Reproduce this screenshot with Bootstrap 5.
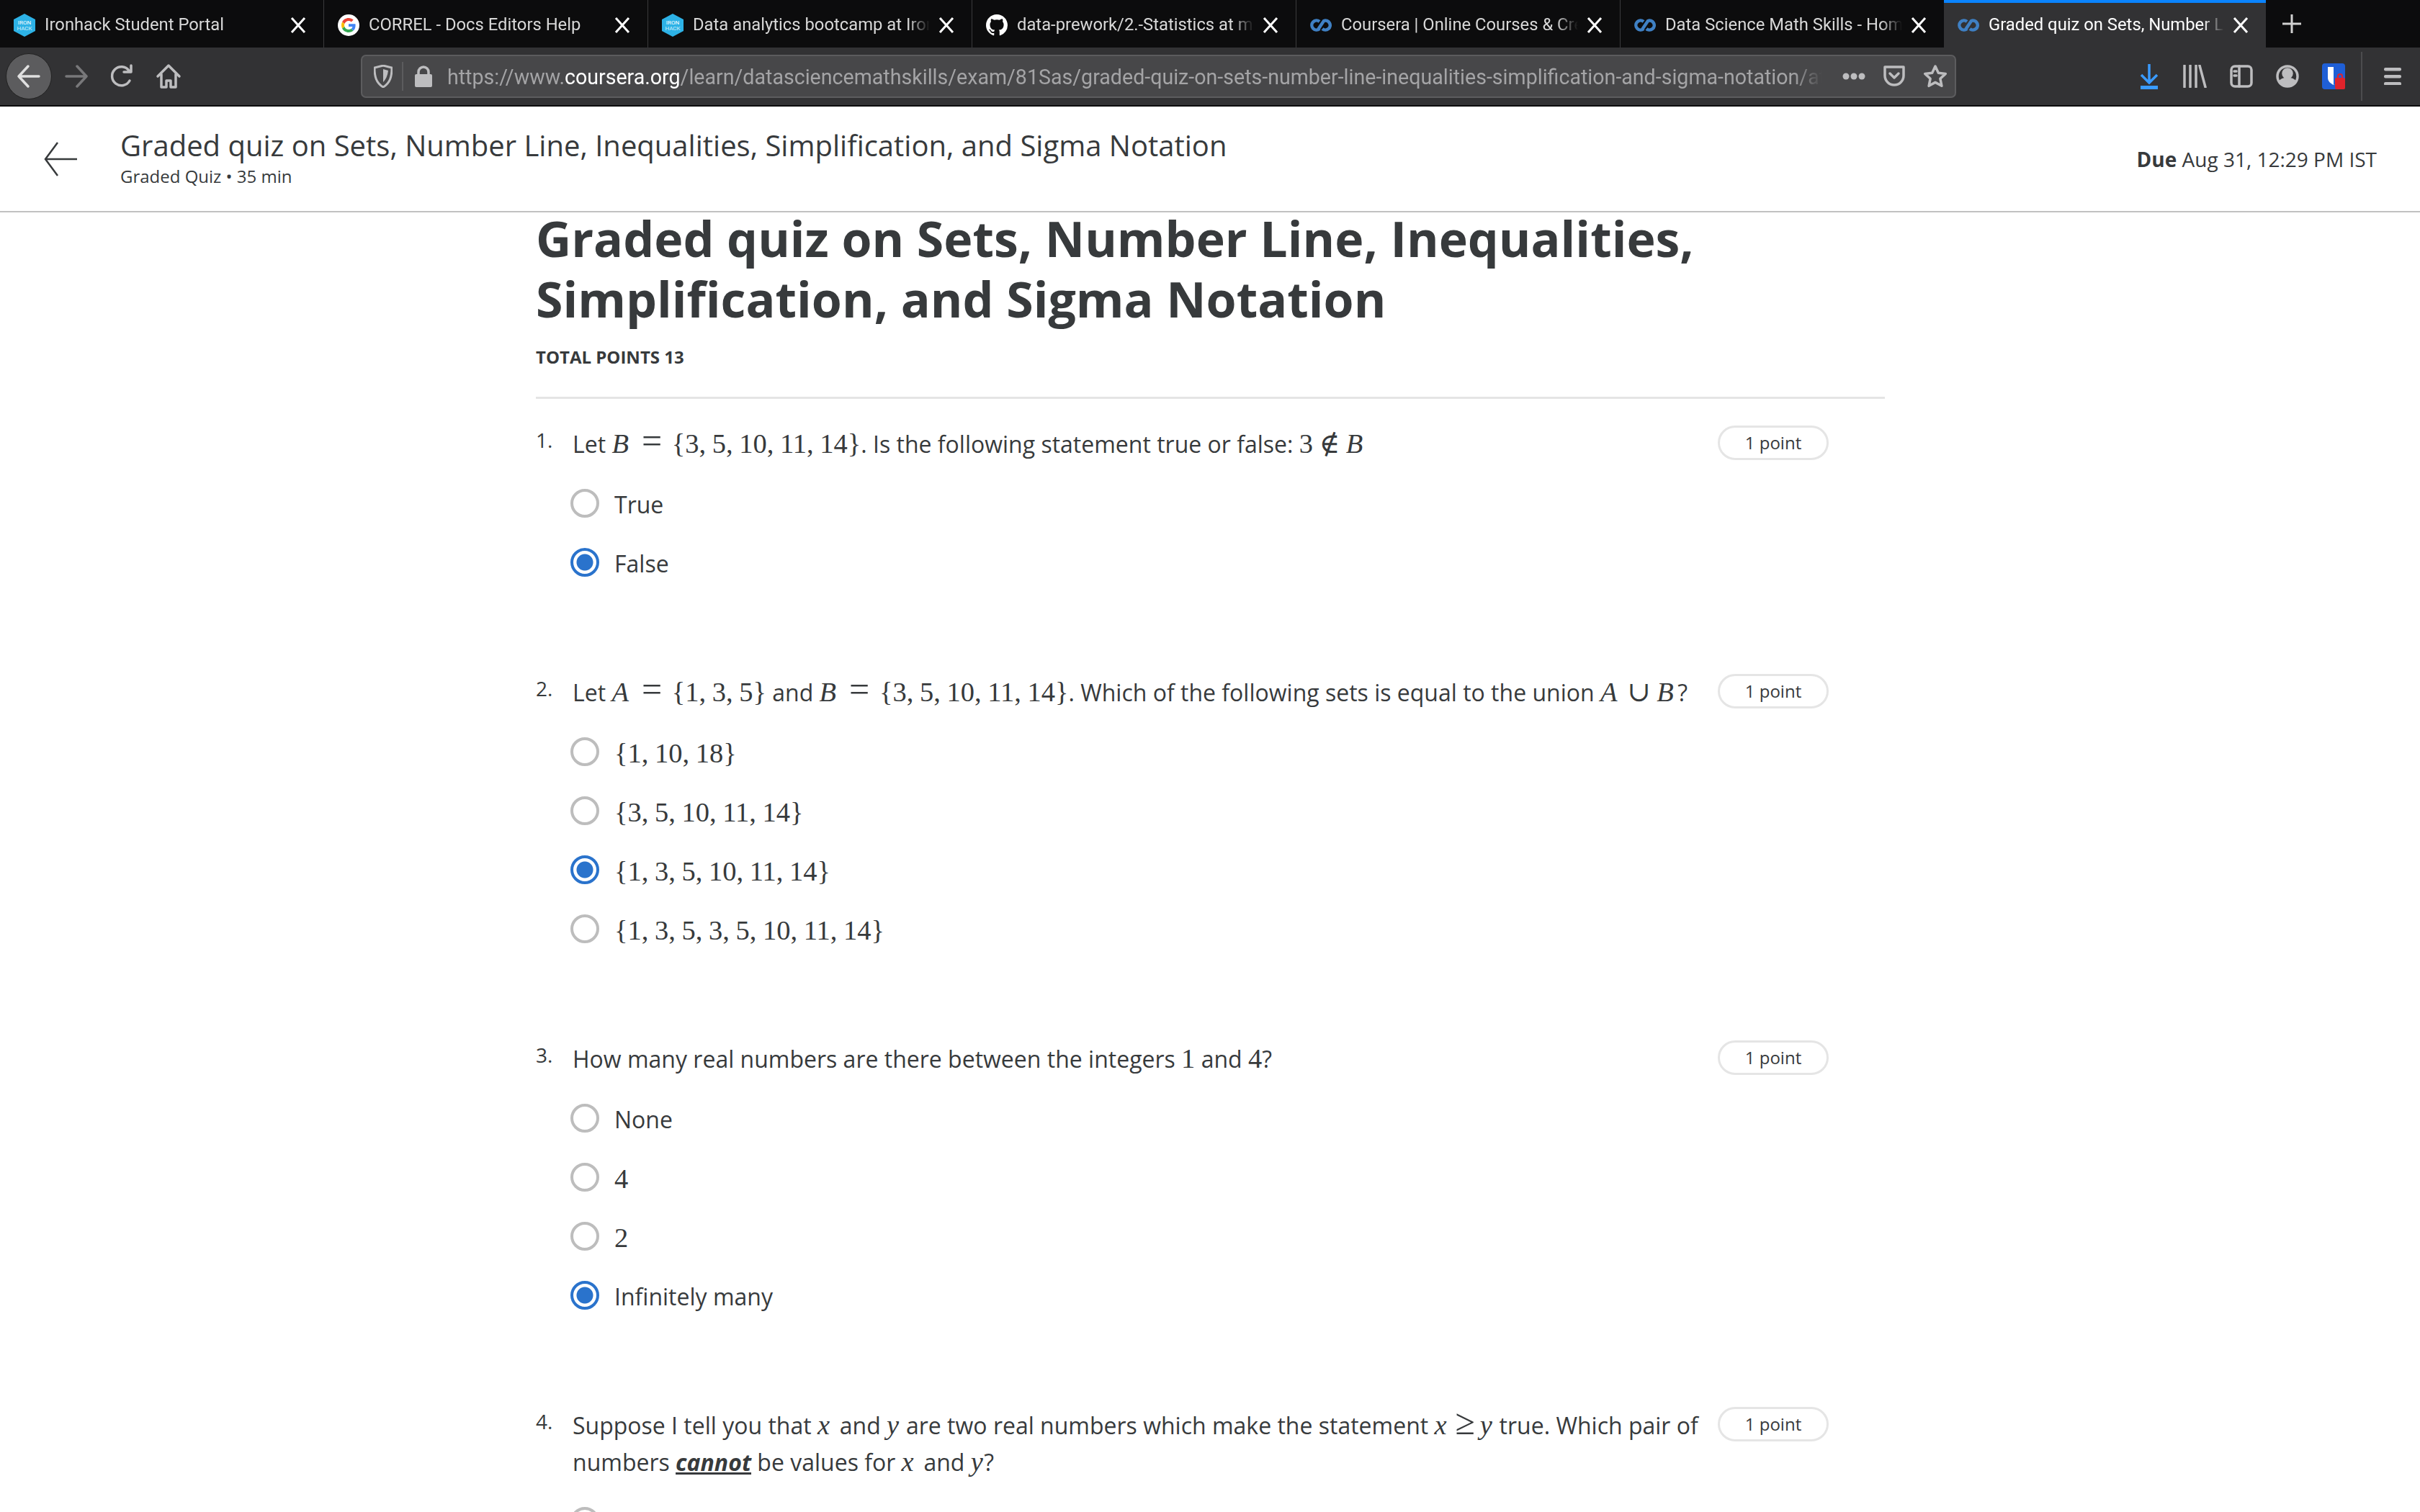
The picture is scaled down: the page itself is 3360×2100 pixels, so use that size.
<!DOCTYPE html>
<html lang="en">
<head>
<meta charset="UTF-8" />
<meta name="viewport" content="width=device-width, initial-scale=1.0" />
<title>Graded quiz on Sets, Number Line, Inequalities, Simplification, and Sigma Notation</title>
<link href="https://cdn.jsdelivr.net/npm/bootstrap@5.3.0/dist/css/bootstrap.min.css" rel="stylesheet" />
<style>
  html, body { height: 2100px; overflow: hidden; background: #fff; }
  body { font-family: "Open Sans", sans-serif; color: #373a3c; }

  /* browser chrome */
  .tabstrip { height: 66px; background: #0c0c0d; font-family: Roboto, sans-serif; }
  .tabitem { width: 450px; height: 66px; padding: 3px 24px 0 19px; border-right: 1.5px solid #3a3a3c; color: #d8d8d8; font-size: 23.8px; }
  .tabitem.noline { border-right-color: transparent; }
  .tabitem.current { width: 447px; margin-left: -1px; background: #323234; border-top: 4px solid #0a84ff; border-right: 0; color: #fff; padding-top: 0; }
  .tabicon { width: 30px; height: 32px; flex: none; margin-right: 13px; }
  .tabname { flex: 1; overflow: hidden; white-space: nowrap; -webkit-mask-image: linear-gradient(to right, #000 calc(100% - 30px), transparent 100%); mask-image: linear-gradient(to right, #000 calc(100% - 30px), transparent 100%); }
  .tabclose { width: 22px; height: 22px; flex: none; margin-left: 12px; }
  .tabplus { margin-left: 22px; width: 28px; height: 28px; }
  .toolstrip { height: 82px; background: #323234; border-bottom: 2px solid #0c0c0d; padding-left: 8px; }
  .tbtn { fill: none; stroke: #bdbdbf; stroke-width: 3.5; stroke-linecap: round; stroke-linejoin: round; flex: none; }
  .backcirc { width: 64px; height: 64px; border-radius: 50%; background: #5c5c5e; flex: none; border: 1px solid #222; }
  .fwdbtn { margin-left: 16px; }
  .reloadbtn { margin-left: 28px; }
  .homebtn { margin-left: 30px; }
  .urlbox { width: 2215px; height: 60px; margin-left: 249px; background: #474749; border: 2px solid #5c5c5e; border-radius: 7px; flex: none; padding: 0 10px 0 16px; }
  .urlsep { width: 2px; height: 40px; background: #5c5c5e; margin: 0 16px 0 13px; }
  .urltext { flex: 1; margin: 2px 12px 0 21px; overflow: hidden; white-space: nowrap; font-family: Roboto, sans-serif; font-size: 28.6px; color: #a4a4a6; -webkit-mask-image: linear-gradient(to right, #000 calc(100% - 40px), transparent 100%); mask-image: linear-gradient(to right, #000 calc(100% - 40px), transparent 100%); }
  .urltext b { font-weight: 400; color: #fff; }
  .rightseq { margin-left: auto; padding-right: 26px; gap: 32px; }
  .vsep { width: 2px; height: 68px; background: #4c4c4e; margin-left: -10px; margin-right: -2px; }

  /* quiz header */
  .quizbar { height: 147px; border-bottom: 2px solid #c1c1c1; padding: 0 60px; }
  .quizback { width: 48px; height: 50px; margin-right: 59px; flex: none; }
  .quizhead { padding-bottom: 4px; }
  .quiztitle { font-size: 40px; line-height: 52px; }
  .quizsub { font-size: 24px; line-height: 34px; }
  .quizdue { font-size: 28px; }

  /* quiz body */
  .quizmain { width: 1873px; margin-left: 744px; }
  .bigtitle { font-size: 68px; line-height: 84px; font-weight: 700; margin: -6px 0 0; color: #373a3c; }
  .totalpts { font-size: 24px; font-weight: 700; line-height: 34px; margin-top: 22px; padding-bottom: 38px; border-bottom: 3px solid #e5e5e5; }
  .qblock { padding-right: 78px; margin-bottom: 112px; }
  .qfirst { margin-top: 37px; }
  .qnum { width: 51px; flex: none; font-size: 28px; line-height: 40px; }
  .qtext { flex: 1; font-size: 32px; line-height: 51px; padding-right: 14px; }
  .ptpill { width: 154px; height: 48px; flex: none; border: 3px solid #e5e5e5; border-radius: 24px; font-size: 24px; margin-top: 0; }
  .optlist { margin-top: 18px; padding-left: 48px; }
  .optrow { height: 82px; font-size: 32px; margin: 0; padding: 0; }
  .optrow .form-check-input { width: 40px; height: 40px; margin: -4px 21px 0 0; float: none; flex: none; border: 4px solid #bdbdbd; background-color: #fff; box-shadow: none; }
  .optrow .form-check-input:checked { border-color: #2a73cc; background-color: #fff; background-image: radial-gradient(circle, #2a73cc 0, #2a73cc 11px, #fff 12px); }
  .mth { font-family: "Liberation Serif", "DejaVu Serif", serif; font-size: 38.5px; line-height: 1; white-space: nowrap; word-spacing: -1px; }
  .mth i { font-style: italic; padding-right: .14em; }
  .mth i.tight { padding-right: .04em; }
  .mth .rel { font-size: 50px; line-height: 0; margin: 0 5px 0 4px; }
  .mth .relsm { font-size: 50px; line-height: 0; margin: 0 -2px; }
  .cannot { font-weight: 700; font-style: italic; }
</style>
</head>
<body>

<svg width="0" height="0" class="position-absolute">
  <symbol id="ico-close" viewBox="0 0 22 22"><path d="M2 1 20 21M20 1 2 21" fill="none" stroke="#fff" stroke-width="3"/></symbol>
  <symbol id="ico-iron" viewBox="0 0 30 32"><path d="M15 0 30 8v16l-15 8-15-8V8z" fill="#2db2e6"/><text x="15" y="15" font-size="8" text-anchor="middle" fill="#fff" font-family="Roboto, sans-serif">IRON</text><text x="15" y="23" font-size="8" text-anchor="middle" fill="#cdeefb" font-family="Roboto, sans-serif">HACK</text></symbol>
  <symbol id="ico-google" viewBox="0 0 48 48"><circle cx="24" cy="24" r="24" fill="#fff"/><g transform="translate(8 8) scale(.667)"><path fill="#EA4335" d="M24 9.5c3.5 0 6.700 1.200 9.200 3.600l6.900-6.900C35.900 2.400 30.500 0 24 0 14.600 0 6.500 5.400 2.600 13.200l8 6.200C12.500 13.700 17.800 9.500 24 9.500z"/><path fill="#4285F4" d="M47 24.500c0-1.600-.1-3.100-.4-4.500H24v9h12.900c-.6 3-2.200 5.500-4.700 7.200l7.700 6C44.400 37.900 47 31.800 47 24.500z"/><path fill="#FBBC05" d="M10.500 28.600c-.5-1.400-.8-3-.8-4.600s.3-3.200.8-4.600l-8-6.200C.9 16.500 0 20.100 0 24s.9 7.500 2.600 10.800z"/><path fill="#34A853" d="M24 48c6.500 0 11.900-2.100 15.900-5.800l-7.700-6c-2.200 1.400-4.900 2.300-8.200 2.300-6.200 0-11.500-4.200-13.400-9.900l-8 6.200C6.500 42.600 14.600 48 24 48z"/></g></symbol>
  <symbol id="ico-git" viewBox="0 0 16 16"><path fill="#fff" fill-rule="evenodd" d="M8 0C3.580 0 0 3.580 0 8c0 3.540 2.290 6.530 5.470 7.590.4.070.55-.17.55-.38 0-.19-.01-.82-.01-1.490-2.010.37-2.530-.49-2.690-.94-.09-.23-.48-.94-.82-1.130-.28-.15-.68-.52-.01-.53.630-.01 1.080.58 1.230.82.720 1.210 1.870.87 2.330.66.070-.52.280-.87.510-1.070-1.780-.2-3.640-.89-3.640-3.950 0-.87.310-1.590.820-2.150-.08-.2-.36-1.020.08-2.120 0 0 .67-.21 2.200.82.640-.18 1.320-.27 2-.27.68 0 1.360.09 2 .27 1.530-1.040 2.200-.82 2.200-.82.440 1.100.160 1.920.080 2.120.51.560.820 1.270.820 2.150 0 3.070-1.870 3.750-3.650 3.950.29.250.54.730.54 1.480 0 1.070-.01 1.930-.01 2.200 0 .21.15.46.55.38A8.013 8.013 0 0016 8c0-4.420-3.580-8-8-8z"/></symbol>
  <symbol id="ico-cou" viewBox="0 0 30 32"><path d="M13 11a6.500 6.500 0 1 0 0 10M11 22 19 10a6.500 6.500 0 1 1-2 11" fill="none" stroke="#3f80c4" stroke-width="4.500"/></symbol>
</svg>

<div class="tabstrip d-flex align-items-stretch">
  <div class="tabitem d-flex align-items-center"><svg class="tabicon"><use href="#ico-iron"/></svg><span class="tabname">Ironhack Student Portal</span><svg class="tabclose"><use href="#ico-close"/></svg></div>
  <div class="tabitem d-flex align-items-center"><svg class="tabicon"><use href="#ico-google"/></svg><span class="tabname">CORREL - Docs Editors Help</span><svg class="tabclose"><use href="#ico-close"/></svg></div>
  <div class="tabitem d-flex align-items-center"><svg class="tabicon"><use href="#ico-iron"/></svg><span class="tabname">Data analytics bootcamp at Ironhack</span><svg class="tabclose"><use href="#ico-close"/></svg></div>
  <div class="tabitem d-flex align-items-center"><svg class="tabicon"><use href="#ico-git"/></svg><span class="tabname">data-prework/2.-Statistics at master</span><svg class="tabclose"><use href="#ico-close"/></svg></div>
  <div class="tabitem d-flex align-items-center"><svg class="tabicon"><use href="#ico-cou"/></svg><span class="tabname">Coursera | Online Courses &amp; Credentials</span><svg class="tabclose"><use href="#ico-close"/></svg></div>
  <div class="tabitem noline d-flex align-items-center"><svg class="tabicon"><use href="#ico-cou"/></svg><span class="tabname">Data Science Math Skills - Home</span><svg class="tabclose"><use href="#ico-close"/></svg></div>
  <div class="tabitem current d-flex align-items-center"><svg class="tabicon"><use href="#ico-cou"/></svg><span class="tabname">Graded quiz on Sets, Number Line</span><svg class="tabclose"><use href="#ico-close"/></svg></div>
  <div class="d-flex align-items-center"><svg class="tabplus" viewBox="0 0 28 28"><path d="M14 1v26M1 14h26" stroke="#d0d0d0" stroke-width="3"/></svg></div>
</div>

<div class="toolstrip d-flex align-items-center">
  <div class="backcirc d-flex align-items-center justify-content-center">
    <svg class="tbtn" width="36" height="36" viewBox="0 0 36 36"><path d="M32 18H4M17 4 4 18l13 14" stroke="#e0e0e0"/></svg>
  </div>
  <svg class="tbtn fwdbtn" width="36" height="36" viewBox="0 0 36 36" opacity=".5"><path d="M4 18h28M19 4l13 14-13 14"/></svg>
  <svg class="tbtn reloadbtn" width="34" height="36" viewBox="0 0 34 36"><path d="M28 24a13 13 0 1 1-1-14M30 3v9H20"/></svg>
  <svg class="tbtn homebtn" width="36" height="36" viewBox="0 0 36 36"><path d="M3 18 18 3l15 15M8 15v18h7v-9h6v9h7V15"/></svg>

  <div class="urlbox d-flex align-items-center">
    <svg width="26" height="32" viewBox="0 0 26 32"><path d="M13 1 25 4c0 12-2 21-12 27C3 25 1 16 1 4z" fill="none" stroke="#bdbdbf" stroke-width="3"/><path d="M13 6v18c4-4 6-9 7-16z" fill="#bdbdbf"/></svg>
    <span class="urlsep"></span>
    <svg width="24" height="30" viewBox="0 0 24 30"><path d="M5 13V9a7 7 0 0 1 14 0v4" fill="none" stroke="#bdbdbf" stroke-width="3.500"/><rect y="12" width="24" height="18" rx="2" fill="#bdbdbf"/></svg>
    <div class="urltext">https://www.<b>coursera.org</b>/learn/datasciencemathskills/exam/81Sas/graded-quiz-on-sets-number-line-inequalities-simplification-and-sigma-notation/attempt</div>
    <svg class="mx-3" width="32" height="12" viewBox="0 0 32 12"><g fill="#bdbdbf"><circle cx="5" cy="6" r="4.500"/><circle cx="16" cy="6" r="4.500"/><circle cx="27" cy="6" r="4.500"/></g></svg>
    <svg class="tbtn ms-2" width="32" height="32" viewBox="0 0 32 32"><path d="M3 3h26v12a13 13 0 0 1-26 0zM10 12l6 6 6-6"/></svg>
    <svg class="tbtn ms-4" width="34" height="34" viewBox="0 0 34 34"><path d="m17 3 4.300 9.200 10 1.200-7.400 6.900 2 10L17 25.400 8.100 30.300l2-10-7.400-6.900 10-1.200z"/></svg>
  </div>

  <div class="rightseq d-flex align-items-center">
    <svg width="28" height="36" viewBox="0 0 28 36"><path d="M14 1v25M3 16l11 11 11-11" fill="none" stroke="#3a9bff" stroke-width="3.500"/><rect x="2" y="31" width="24" height="5" fill="#3a9bff"/></svg>
    <svg class="tbtn" width="34" height="32" viewBox="0 0 34 32"><path d="M3 1v30M11 1v30M19 1v30M24 1l8 30"/></svg>
    <svg class="tbtn" width="32" height="32" viewBox="0 0 32 32"><rect x="2" y="2" width="28" height="28" rx="5"/><path d="M13 2v28" /><path d="M6 9h3M6 15h3" /></svg>
    <svg class="tbtn" width="32" height="32" viewBox="0 0 32 32"><circle cx="16" cy="16" r="14"/><circle cx="16" cy="12" r="6" fill="#bdbdbf"/><path d="M5 24c4-6 18-6 22 0-4 6-18 6-22 0z" fill="#bdbdbf"/></svg>
    <svg width="32" height="36" viewBox="0 0 32 36"><rect width="32" height="36" rx="4" fill="#1f5fd6"/><path d="M8 5h16v15c0 5-4 8-8 10-4-2-8-5-8-10z" fill="#fff"/><path d="M16 5h8v15c0 5-4 8-8 10z" fill="#1f5fd6"/><rect x="18" y="20" width="14" height="16" rx="2" fill="#e0232b"/><path d="M22 21v-3a3 3 0 0 1 6 0v3" fill="none" stroke="#e0232b" stroke-width="2"/></svg>
    <span class="vsep"></span>
    <svg width="24" height="24" viewBox="0 0 24 24"><g fill="#bdbdbf"><rect width="24" height="4.500" rx="2" y="0"/><rect width="24" height="4.500" rx="2" y="10"/><rect width="24" height="4.500" rx="2" y="20"/></g></svg>
  </div>
</div>

<header class="quizbar d-flex align-items-center">
  <svg class="quizback" viewBox="0 0 48 50"><path d="M47 25H3M20 2 3 25l17 23" fill="none" stroke="#373a3c" stroke-width="2.500"/></svg>
  <div class="quizhead flex-grow-1">
    <div class="quiztitle">Graded quiz on Sets, Number Line, Inequalities, Simplification, and Sigma Notation</div>
    <div class="quizsub">Graded Quiz • 35 min</div>
  </div>
  <div class="quizdue"><b>Due</b> Aug 31, 12:29 PM IST</div>
</header>

<main class="quizmain">
  <h1 class="bigtitle">Graded quiz on Sets, Number Line, Inequalities,<br>Simplification, and Sigma Notation</h1>
  <div class="totalpts text-uppercase">Total points 13</div>

  <section class="qblock qfirst">
    <div class="d-flex">
      <div class="qnum">1.</div>
      <div class="qtext">Let <span class="mth"><i>B</i> <span class="rel">=</span> {3, 5, 10, 11, 14}</span>. Is the following statement true or false: <span class="mth">3 ∉ <i>B</i></span></div>
      <div class="ptpill d-flex align-items-center justify-content-center">1 point</div>
    </div>
    <div class="optlist">
      <label class="optrow form-check d-flex align-items-center"><input class="form-check-input" type="radio" name="q1">True</label>
      <label class="optrow form-check d-flex align-items-center"><input class="form-check-input" type="radio" name="q1" checked>False</label>
    </div>
  </section>

  <section class="qblock">
    <div class="d-flex">
      <div class="qnum">2.</div>
      <div class="qtext">Let <span class="mth"><i>A</i> <span class="rel">=</span> {1, 3, 5}</span> and <span class="mth"><i>B</i> <span class="rel">=</span> {3, 5, 10, 11, 14}</span>. Which of the following sets is equal to the union <span class="mth"><i>A</i> ∪ <i>B</i></span>?</div>
      <div class="ptpill d-flex align-items-center justify-content-center">1 point</div>
    </div>
    <div class="optlist">
      <label class="optrow form-check d-flex align-items-center"><input class="form-check-input" type="radio" name="q2"><span class="mth">{1, 10, 18}</span></label>
      <label class="optrow form-check d-flex align-items-center"><input class="form-check-input" type="radio" name="q2"><span class="mth">{3, 5, 10, 11, 14}</span></label>
      <label class="optrow form-check d-flex align-items-center"><input class="form-check-input" type="radio" name="q2" checked><span class="mth">{1, 3, 5, 10, 11, 14}</span></label>
      <label class="optrow form-check d-flex align-items-center"><input class="form-check-input" type="radio" name="q2"><span class="mth">{1, 3, 5, 3, 5, 10, 11, 14}</span></label>
    </div>
  </section>

  <section class="qblock">
    <div class="d-flex">
      <div class="qnum">3.</div>
      <div class="qtext">How many real numbers are there between the integers <span class="mth">1</span> and <span class="mth">4</span>?</div>
      <div class="ptpill d-flex align-items-center justify-content-center">1 point</div>
    </div>
    <div class="optlist">
      <label class="optrow form-check d-flex align-items-center"><input class="form-check-input" type="radio" name="q3">None</label>
      <label class="optrow form-check d-flex align-items-center"><input class="form-check-input" type="radio" name="q3"><span class="mth">4</span></label>
      <label class="optrow form-check d-flex align-items-center"><input class="form-check-input" type="radio" name="q3"><span class="mth">2</span></label>
      <label class="optrow form-check d-flex align-items-center"><input class="form-check-input" type="radio" name="q3" checked>Infinitely many</label>
    </div>
  </section>

  <section class="qblock">
    <div class="d-flex">
      <div class="qnum">4.</div>
      <div class="qtext">Suppose I tell you that <span class="mth"><i>x</i></span> and <span class="mth"><i class="tight">y</i></span> are two real numbers which make the statement <span class="mth"><i>x</i> <span class="relsm">≥</span> <i class="tight">y</i></span> true. Which pair of numbers <u class="cannot">cannot</u> be values for <span class="mth"><i>x</i></span> and <span class="mth"><i class="tight">y</i></span>?</div>
      <div class="ptpill d-flex align-items-center justify-content-center">1 point</div>
    </div>
    <div class="optlist">
      <label class="optrow form-check d-flex align-items-center"><input class="form-check-input" type="radio" name="q4"></label>
    </div>
  </section>
</main>

<script src="https://cdn.jsdelivr.net/npm/bootstrap@5.3.0/dist/js/bootstrap.bundle.min.js"></script>
</body>
</html>
